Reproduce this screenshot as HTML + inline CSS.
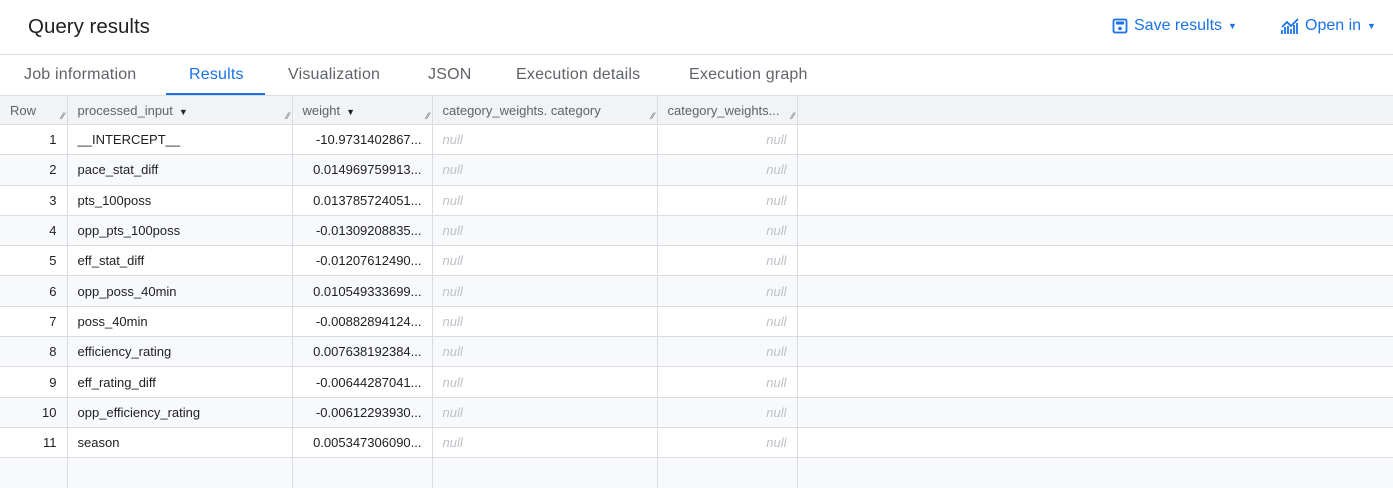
<!DOCTYPE html>
<html><head><style>
body{margin:0;width:1393px;height:462px;overflow:hidden;background:#fff;font-family:"Liberation Sans",sans-serif;color:#202124;position:relative}
.title{position:absolute;left:28px;top:15px;font-size:20.5px;color:#202124}
.act{position:absolute;top:17px;font-size:16px;color:#1a73e8;display:flex;align-items:center;gap:6px}
.tabs{position:absolute;top:54px;left:0;right:0;height:41px;border-top:1px solid #dadce0}
.tab{position:absolute;top:11px;font-size:16px;color:#5f6368;letter-spacing:0.2px}
.tab.on{color:#1a73e8}
.ul{position:absolute;left:166px;top:38px;width:99px;height:3px;background:#1a73e8}
table{position:absolute;top:95px;left:0;border-collapse:collapse;font-size:13px;table-layout:fixed;width:1393px}
th{height:28px;background:#f1f3f4;color:#5f6368;font-weight:normal;text-align:left;padding:0 10px;border-right:1px solid #dadce0;border-top:1px solid #dadce0;position:relative;white-space:nowrap;overflow:hidden}
th.last{border-right:none}
td{height:29.3px;padding:0 10px;border-right:1px solid #dadce0;border-top:1px solid #dadce0;white-space:nowrap;overflow:hidden}
td.last{border-right:none}
tr.s td{background:#f8f9fa}
.r{text-align:right}
.n{color:#bdc1c6;font-style:italic}
.gr{position:absolute;right:2px;bottom:3px;font-size:9px;color:#5f6368}
.car{font-size:9px;margin-left:6px;color:#202124}
</style></head><body>
<div class="title">Query results</div>
<div class="act" style="left:1112px"><svg width="16" height="16" viewBox="0 0 16 16"><rect x="1.5" y="1.5" width="13" height="13" rx="1.5" fill="none" stroke="#1a73e8" stroke-width="1.8"/><rect x="4" y="3.5" width="8" height="3" fill="#1a73e8"/><circle cx="8" cy="10.5" r="1.8" fill="#1a73e8"/></svg>Save results <span style="font-size:9px">▼</span></div>
<div class="act" style="left:1281px"><svg width="18" height="16" viewBox="0 0 18 16"><path d="M1 9 L6 4 L10 8 L17 1" stroke="#1a73e8" stroke-width="1.8" fill="none"/><path d="M1 16V12M4 16V9M7 16V8M10 16V11M13 16V7M16 16V5" stroke="#1a73e8" stroke-width="1.8"/></svg>Open in <span style="font-size:9px">▼</span></div>
<div class="tabs">
<div class="tab" style="left:24px">Job information</div>
<div class="tab on" style="left:189px">Results</div>
<div class="tab" style="left:288px">Visualization</div>
<div class="tab" style="left:428px">JSON</div>
<div class="tab" style="left:516px">Execution details</div>
<div class="tab" style="left:689px">Execution graph</div>
<div class="ul"></div>
</div>
<table>
<colgroup><col style="width:67px"><col style="width:225px"><col style="width:140px"><col style="width:225px"><col style="width:140px"><col></colgroup>
<tr><th>Row<span class="gr">⁄⁄</span></th><th>processed_input<span class="car">▼</span><span class="gr">⁄⁄</span></th><th>weight<span class="car">▼</span><span class="gr">⁄⁄</span></th><th>category_weights. category<span class="gr">⁄⁄</span></th><th>category_weights...<span class="gr">⁄⁄</span></th><th class="last"></th></tr>
<tr><td class="r">1</td><td>__INTERCEPT__</td><td class="r">-10.9731402867...</td><td class="n">null</td><td class="n r">null</td><td class="last"></td></tr>
<tr class="s"><td class="r">2</td><td>pace_stat_diff</td><td class="r">0.014969759913...</td><td class="n">null</td><td class="n r">null</td><td class="last"></td></tr>
<tr><td class="r">3</td><td>pts_100poss</td><td class="r">0.013785724051...</td><td class="n">null</td><td class="n r">null</td><td class="last"></td></tr>
<tr class="s"><td class="r">4</td><td>opp_pts_100poss</td><td class="r">-0.01309208835...</td><td class="n">null</td><td class="n r">null</td><td class="last"></td></tr>
<tr><td class="r">5</td><td>eff_stat_diff</td><td class="r">-0.01207612490...</td><td class="n">null</td><td class="n r">null</td><td class="last"></td></tr>
<tr class="s"><td class="r">6</td><td>opp_poss_40min</td><td class="r">0.010549333699...</td><td class="n">null</td><td class="n r">null</td><td class="last"></td></tr>
<tr><td class="r">7</td><td>poss_40min</td><td class="r">-0.00882894124...</td><td class="n">null</td><td class="n r">null</td><td class="last"></td></tr>
<tr class="s"><td class="r">8</td><td>efficiency_rating</td><td class="r">0.007638192384...</td><td class="n">null</td><td class="n r">null</td><td class="last"></td></tr>
<tr><td class="r">9</td><td>eff_rating_diff</td><td class="r">-0.00644287041...</td><td class="n">null</td><td class="n r">null</td><td class="last"></td></tr>
<tr class="s"><td class="r">10</td><td>opp_efficiency_rating</td><td class="r">-0.00612293930...</td><td class="n">null</td><td class="n r">null</td><td class="last"></td></tr>
<tr><td class="r">11</td><td>season</td><td class="r">0.005347306090...</td><td class="n">null</td><td class="n r">null</td><td class="last"></td></tr>
<tr class="s"><td></td><td></td><td></td><td></td><td></td><td class="last"></td></tr>
</table>
</body></html>
